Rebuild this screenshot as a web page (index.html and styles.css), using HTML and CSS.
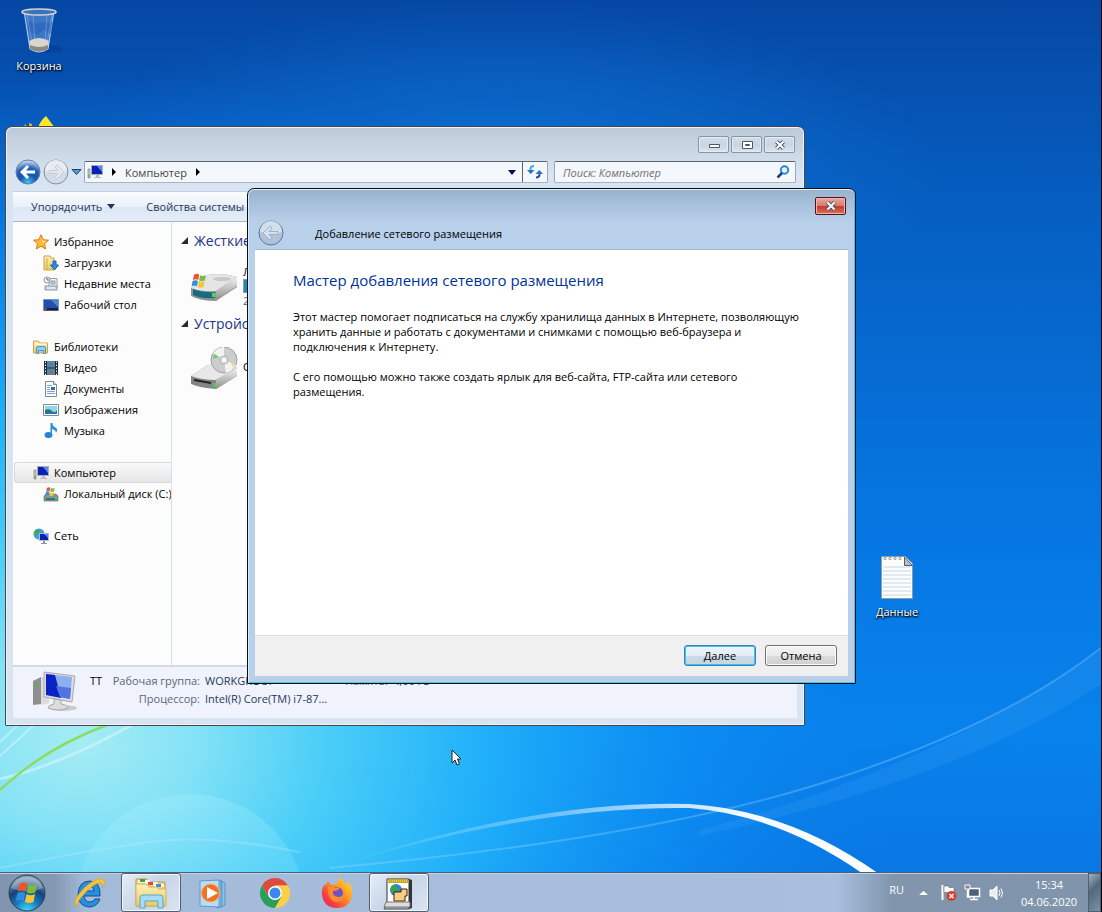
FILE: index.html
```html
<!DOCTYPE html>
<html lang="ru">
<head>
<meta charset="utf-8">
<title>Добавление сетевого размещения</title>
<link rel="stylesheet" href="styles.css">
</head>
<body>
<svg width="0" height="0" class="defs" aria-hidden="true">
  <defs>
    <linearGradient id="metal" x1="0" y1="0" x2="0" y2="1"><stop offset="0" stop-color="#f4f4f4"/><stop offset="1" stop-color="#8e8e8e"/></linearGradient>
    <linearGradient id="fold" x1="0" y1="0" x2="0" y2="1"><stop offset="0" stop-color="#fdf1b8"/><stop offset="1" stop-color="#e9c867"/></linearGradient>
    <symbol id="pc" viewBox="0 0 16 16"><path d="M1 5h2v9H1z" fill="#c9cdd0" stroke="#777" stroke-width=".6"/><path d="M1.500 11h1v2h-1z" fill="#3a3"/><path d="M4.500 1.500h11v9h-11z" fill="#0a22b4" stroke="#a9adb4"/><path d="M10 2l5 0v6z" fill="#5e85ee"/><path d="M9 11h3v2h2v1H7v-1h2z" fill="#b8bcc2"/></symbol>
    <symbol id="flag" viewBox="0 0 16 16"><path d="M2.800 2.500q3-1.700 5 0L6.800 7.500q-2-1.500-5 0z" fill="#e8562a"/><path d="M8.600 3q2.500 1.400 5.500 0L13 8q-3 1.400-5.400 0z" fill="#7dbb3c"/><path d="M1.500 8.500q3-1.500 5 0l-1 5q-2-1.500-5 0z" fill="#2d8fe0"/><path d="M7.400 9q2.500 1.500 5.400 0l-1 5q-3 1.400-5.400 0z" fill="#fac535"/></symbol>
    <symbol id="cross" viewBox="0 0 12 10"><path d="M2.500 1.500l7 7M9.500 1.500l-7 7" stroke="#4e5668" stroke-width="4"/><path d="M2.500 1.500l7 7M9.500 1.500l-7 7" stroke="#fff" stroke-width="2"/></symbol>
  </defs>
</svg>

<div class="desktop">
  <svg class="wallpaper" viewBox="0 0 1102 912" preserveAspectRatio="none" aria-hidden="true">
    <defs>
      <linearGradient id="sky" x1="0" y1="0" x2="0" y2="1"><stop offset="0" stop-color="#0647a4"/><stop offset=".22" stop-color="#055ec0"/><stop offset=".55" stop-color="#0675e0"/><stop offset=".8" stop-color="#0882ec"/><stop offset="1" stop-color="#0a74e0"/></linearGradient>
      <radialGradient id="glow" gradientUnits="userSpaceOnUse" cx="80" cy="740" r="820" gradientTransform="translate(0 140) scale(1 .81)"><stop offset="0" stop-color="#a6ecf4"/><stop offset=".14" stop-color="#84e2f6"/><stop offset=".3" stop-color="#4acef8"/><stop offset=".5" stop-color="#20b0fa" stop-opacity=".97"/><stop offset=".75" stop-color="#0c92f6" stop-opacity=".6"/><stop offset="1" stop-color="#0a7cec" stop-opacity="0"/></radialGradient>
      <radialGradient id="mid" cx=".5" cy=".5" r=".5"><stop offset="0" stop-color="#1078dc" stop-opacity=".75"/><stop offset="1" stop-color="#1078d8" stop-opacity="0"/></radialGradient>
      <linearGradient id="streak" x1="0" x2="1" y1="0" y2="0"><stop offset="0" stop-color="#fff" stop-opacity="0"/><stop offset=".4" stop-color="#fff" stop-opacity=".35"/><stop offset=".75" stop-color="#fff" stop-opacity=".95"/><stop offset="1" stop-color="#fff"/></linearGradient>
      <linearGradient id="arc" x1="0" x2="0" y1="0" y2="1"><stop offset="0" stop-color="#b8f4ff" stop-opacity=".24"/><stop offset="1" stop-color="#b8f4ff" stop-opacity="0"/></linearGradient>
    </defs>
    <path d="M0 0h1102v912H0z" fill="url(#sky)"/>
    <ellipse cx="500" cy="170" rx="440" ry="170" fill="url(#mid)"/>
    <path d="M0 0h1102v912H0z" fill="url(#glow)"/>
    <circle cx="190" cy="910" r="116" fill="url(#arc)"/>
    <path d="M0 779Q60 765 132 725" stroke="#d9f8fb" stroke-width="3" opacity=".55" fill="none"/>
    <path d="M0 756Q20 738 34 725M0 742L18 725" stroke="#d9f8fb" stroke-width="2" opacity=".5" fill="none"/>
    <path d="M0 790Q45 748 107 725" stroke="#8bdd61" stroke-width="2.500" fill="none"/>
    <path d="M0 868Q90 850 150 842T300 852" stroke="#bfeaff" stroke-width="2" opacity=".3" fill="none"/>
    <path d="M330 868Q640 840 820 784T1102 648" stroke="#a5deff" stroke-width="2" opacity=".3" fill="none"/>
    <path d="M700 830Q930 770 1102 650V684Q960 780 700 836z" fill="#62bcff" opacity=".13"/>
    <path d="M330 868Q530 800 690 804Q790 810 880 874L864 874Q780 815 690 808Q530 806 330 868z" fill="url(#streak)"/>
  </svg>

  <div class="shortcut bin">
    <svg width="48" height="48" viewBox="0 0 48 48" aria-hidden="true"><ellipse cx="33" cy="42" rx="14" ry="4" fill="#06318a" opacity=".4"/><path d="M9 4l6 38q9 6 18 0l6-38z" fill="#79aae8" fill-opacity=".48" stroke="#b9d3f2" stroke-width="1"/><path d="M13 14l9 3 4-2 8 1 4-2-2 13-7-4-7 5-9-4z" fill="#245bb5" opacity=".5"/><path d="M14 34q10-6 20 0l-1 8q-9 5-18 0z" fill="#d8d6cf"/><path d="M15 42q9 5 18 0v-4q-9 4-18 0z" fill="#8d8a82"/><path d="M12 8l5 28M18 9l2 26M32 9l-2 26M37 8l-5 28" stroke="#cde1fa" opacity=".3"/><ellipse cx="24" cy="5" rx="17" ry="3" fill="#3d70be" stroke="#d4d4d0" stroke-width="1.500"/></svg>
    <span>Корзина</span>
  </div>
  <svg class="peek" width="40" height="20" viewBox="0 0 40 20" aria-hidden="true"><path d="M0 12l5-4v4zM8 12V7l3 1v4z" fill="#f0a81c"/><path d="M17 12q2-7 8-12l9 12z" fill="#fde52b"/></svg>
  <div class="shortcut data">
    <svg width="48" height="48" viewBox="0 0 48 48" aria-hidden="true"><path d="M8.500 3.500h24l7 7v35h-31z" fill="#fdfdfd" stroke="#8d9aa8"/><path d="M31.500 4v8.500h8z" fill="#b8bcc4" stroke="#555e6c"/><path d="M10 14h28M10 18h28M10 22h28M10 26h28M10 30h28M10 34h28M10 38h28M10 42h28" stroke="#c5d5e6"/><g fill="#fff" stroke="#999"><circle cx="12" cy="5.500" r="1.200"/><circle cx="17" cy="5.500" r="1.200"/><circle cx="22" cy="5.500" r="1.200"/><circle cx="27" cy="5.500" r="1.200"/></g></svg>
    <span>Данные</span>
  </div>

  <section class="explorer" aria-label="Компьютер">
    <div class="caption">
      <button aria-label="Свернуть"><svg width="12" height="10"><path d="M1.500 4.500h10v3h-10z" fill="#fff" stroke="#4e5668"/></svg></button>
      <button aria-label="Развернуть"><svg width="12" height="10"><path d="M1.500 1.500h10v7h-10z" fill="#fff" stroke="#4e5668"/><path d="M4.500 4.500h4v1h-4z" fill="#fff" stroke="#4e5668"/></svg></button>
      <button aria-label="Закрыть"><svg width="12" height="10"><use href="#cross"/></svg></button>
    </div>
    <div class="navbar">
      <div class="travel">
        <button class="round" aria-label="Назад"><svg width="26" height="26" viewBox="0 0 26 26"><defs><radialGradient id="bb" cx=".5" cy=".95" r=".9"><stop offset="0" stop-color="#3fc9f8"/><stop offset=".4" stop-color="#1453ae"/><stop offset=".7" stop-color="#2560bb"/><stop offset="1" stop-color="#c2d5f0"/></radialGradient></defs><circle cx="13" cy="13" r="12" fill="url(#bb)" stroke="#6b7e96"/><path d="M12 6L5 13l7 7 2-2-3-3.500h9v-3h-9L14 8z" fill="#fff"/></svg></button>
        <button class="round" aria-label="Вперед"><svg width="26" height="26" viewBox="0 0 26 26"><circle cx="13" cy="13" r="12" fill="#d2dbe6" stroke="#818e9f"/><path d="M2 12a11 11 0 0 1 22 0q-11 4-22 0z" fill="#e9edf2"/><path d="M14 6l7 7-7 7-2-2 3-3.500H6v-3h9L12 8z" fill="#e2e8ee" stroke="#c6ced8"/></svg></button>
        <svg width="11" height="8"><path d="M1 1.500h9L5.500 6.500z" fill="#4f9fd0" stroke="#1d3f78"/></svg>
      </div>
      <div class="address">
        <svg width="16" height="16"><use href="#pc"/></svg>
        <svg class="sep" width="6" height="8"><path d="M1 0l4 4-4 4z"/></svg>
        <span>Компьютер</span>
        <svg class="sep" width="6" height="8"><path d="M1 0l4 4-4 4z"/></svg>
        <svg class="drop" width="8" height="5"><path d="M0 0h8L4 5z" fill="#0a0a5c"/></svg>
        <button class="refresh" aria-label="Обновить"><svg width="16" height="14" viewBox="0 0 16 14"><path d="M7 1Q3.500 1 3.500 4v2" stroke="#35b4d8" stroke-width="2" fill="none"/><path d="M0 5h7.500L3.700 9z" fill="#2a70c4"/><path d="M9 12.500q3.500 0 3.500-3V8" stroke="#26509f" stroke-width="2" fill="none"/><path d="M8.500 9H16l-3.700-4z" fill="#2a70c4"/></svg></button>
      </div>
      <label class="search"><input type="text" placeholder="Поиск: Компьютер" aria-label="Поиск: Компьютер"><svg width="14" height="14"><circle cx="8.500" cy="5" r="3.700" fill="#e4f3fc" stroke="#2f86cc" stroke-width="2"/><path d="M6 8l-4.500 4.500" stroke="#1b4088" stroke-width="2.500"/></svg></label>
    </div>
    <div class="toolbar"><button>Упорядочить <svg width="8" height="5"><path d="M0 0h8L4 5z" fill="#1e395b"/></svg></button><button>Свойства системы</button></div>
    <div class="body">
      <nav class="tree">
        <ul>
          <li><svg width="16" height="16"><path d="M8 .8l2.200 4.900 5.300.5-4 3.500 1.200 5.300L8 12.200 3.300 15l1.200-5.300-4-3.500 5.300-.5z" fill="#fdb93a" stroke="#d67a18"/><path d="M8 3l1.500 3.500 3.500.5-3 2.500z" fill="#ffe28a"/></svg><a href="#">Избранное</a></li>
          <li class="sub"><svg width="16" height="16"><path d="M1 1h6l1 2h3v12H1z" fill="url(#fold)" stroke="#c9a544"/><path d="M4 3v12" stroke="#d0ae50"/><path d="M10 6h3v4h2.500L11.500 15 7.500 10H10z" fill="#2a8ce8" stroke="#1560a8"/></svg><a href="#">Загрузки</a></li>
          <li class="sub"><svg width="16" height="16"><path d="M6 2.500h8v9H6z" fill="#edf2f6" stroke="#98a4ae"/><path d="M8 5h4v3H8zM2 10h12v4H2z" fill="#c6d2db" stroke="#909ca6"/><path d="M4 12h8" stroke="#fff"/><circle cx="4" cy="4" r="3" fill="#f8f8f8" stroke="#8795a0"/><path d="M4 2v2h2" stroke="#666" fill="none"/></svg><a href="#">Недавние места</a></li>
          <li class="sub"><svg width="16" height="16"><path d="M.5 2.500h15v11H.5z" fill="#1f50b0" stroke="#7492bc"/><path d="M8 3h7v7z" fill="#4e83cd"/><path d="M1 11h14v2.500H1z" fill="#162038"/><path d="M1 12h3" stroke="#f06a38"/></svg><a href="#">Рабочий стол</a></li>
          <li class="gap"><svg width="16" height="16"><path d="M.5 2h5l1 2h8v10H.5z" fill="url(#fold)" stroke="#caa64a"/><path d="M2 5h12" stroke="#fff"/><path d="M3.500 14.500V9q0-1.500 1.500-1.500h6q1.500 0 1.500 1.500v5.500h-2v-3h-5v3z" fill="#90d0f5" stroke="#4696c8"/></svg><a href="#">Библиотеки</a></li>
          <li class="sub"><svg width="16" height="16"><path d="M1 1h14v14H1z" fill="#252b31"/><path d="M4 1h8v6.500H4zM4 8.500h8V15H4z" fill="#3f8ec4"/><path d="M6 2l4 2-2 3zM5 14l3-5 3 4z" fill="#bc5f3c"/><path d="M2.500 1.500v14M13.500 1.500v14" stroke="#e8e8e8" stroke-dasharray="1.500 1.500"/></svg><a href="#">Видео</a></li>
          <li class="sub"><svg width="16" height="16"><path d="M2.500.5h8l3 3v12h-11z" fill="#fff" stroke="#7e8a95"/><path d="M10.500.5v3h3" fill="#dfe5ea" stroke="#7e8a95"/><path d="M4 4.500h5M4 6.500h3M4 8.500h3M4 10.500h8M4 12.500h8" stroke="#7fa3c4"/><path d="M8 6h4v3H8z" fill="#2c6fb8"/></svg><a href="#">Документы</a></li>
          <li class="sub"><svg width="16" height="16"><path d="M.5 2.500h15v11H.5z" fill="#fff" stroke="#7f8b94"/><path d="M2 4h12v8H2z" fill="#8fd4f0"/><path d="M2 8q4-2 7 1t5-1v4H2z" fill="#28795f"/><path d="M2 10h12v2H2z" fill="#2474b8"/></svg><a href="#">Изображения</a></li>
          <li class="sub"><svg width="16" height="16"><ellipse cx="5.500" cy="12" rx="4" ry="3" fill="#2580cf"/><path d="M7.500 0h2q0 3 3 4.500T13 10q0-3-4-4v6h-1.500z" fill="#2b8fdc"/></svg><a href="#">Музыка</a></li>
          <li class="gap selected"><svg width="16" height="16"><use href="#pc"/></svg><a href="#">Компьютер</a></li>
          <li class="sub"><svg width="16" height="16"><path d="M1 10l2-2h10l2 2v5H1z" fill="#8b9294" stroke="#5d6466" stroke-width=".6"/><path d="M3 12h9v2H3z" fill="#2c7a80"/><path d="M12 12h2v2h-2z" fill="#37d146"/><svg x="2" width="11" height="11"><use href="#flag"/></svg></svg><a href="#">Локальный диск (C:)</a></li>
          <li class="gap"><svg width="16" height="16"><circle cx="6" cy="6" r="5.500" fill="#3f9fe8"/><path d="M2 3q3-3 5-1L5 5 3 8 1 6zM7 7l4-2-1 5z" fill="#3dae40"/><path d="M6.500 5.500h9v7h-9z" fill="#0a22b4" stroke="#b5bbc4"/><path d="M11 6h4v4z" fill="#5e85ee"/><path d="M10 13h2v2h2v1H8v-1h2z" fill="#8e949c"/></svg><a href="#">Сеть</a></li>
        </ul>
      </nav>
      <div class="files">
        <h2><svg width="7" height="7"><path d="M7 0v7H0z" fill="#2a2a2a"/></svg>Жесткие диски (1)</h2>
        <div class="drive">
          <svg width="48" height="48" viewBox="0 0 48 48"><path d="M1 24L18 11q14-3 29 2v10L26 37Q10 37 1 32z" fill="#929292"/><path d="M1 24L18 11q14-3 29 2L26 27Q12 28 1 24z" fill="#e5e5e5"/><path d="M26 27L47 13v9L26 36z" fill="url(#metal)"/><path d="M3 25q12 4 22 3v6Q12 35 3 31z" fill="#176b82"/><path d="M22 29h3v4h-3z" fill="#45e04a"/><ellipse cx="32" cy="15" rx="9" ry="2" fill="#c8c8c8"/><svg x="1" y="8" width="17" height="17"><use href="#flag"/></svg></svg>
          <div class="info"><span>Локальный диск (C:)</span><div class="meter"></div><small>26,5 ГБ свободно из 39,9 ГБ</small></div>
        </div>
        <h2><svg width="7" height="7"><path d="M7 0v7H0z" fill="#2a2a2a"/></svg>Устройства со съемными носителями (1)</h2>
        <div class="drive">
          <svg width="48" height="48" viewBox="0 0 48 48"><path d="M1 29l17-11q15-2 29 3v8L26 42Q10 41 1 37z" fill="#858585"/><path d="M1 29l17-11q15-2 29 3L26 33Q12 33 1 29z" fill="#e8e8e8"/><path d="M26 33l21-12v8L26 42z" fill="url(#metal)"/><path d="M4 33l17 3" stroke="#222" stroke-width="2"/><path d="M23 36h3v4h-3z" fill="#3fd441"/><circle cx="34" cy="13" r="13" fill="#cdcdcd" stroke="#a2a2a2"/><path d="M34 13L23 6q5-6 11-6zM34 13l12 5q-4 7-10 8z" fill="#f2f2f2"/><path d="M24 7l5 3-6 2z" fill="#67cf65"/><path d="M41 16l5 1-3 3z" fill="#ecd58a"/><circle cx="34" cy="13" r="4" fill="#e8e8e8" stroke="#aaa"/><circle cx="34" cy="13" r="1.500" fill="#fff"/></svg>
          <div class="info"><span>CD-дисковод (D:)</span></div>
        </div>
      </div>
    </div>
    <footer class="details">
      <svg width="48" height="44" viewBox="0 0 48 44"><path d="M1 11l8-4v27l-8 1z" fill="#8d908f"/><path d="M9 7l8 2v24l-8 2z" fill="#dcdcdc"/><path d="M3 15h3v2H3z" fill="#36c53c"/><ellipse cx="31" cy="38" rx="14" ry="3" fill="#c9ccd4"/><path d="M12 2l31 4-3 26-28-5z" fill="#dadcdf" stroke="#aaa"/><path d="M14 4l26 3-2 22-24-4z" fill="#8daff2"/><path d="M14 4l9 1 6 23-15-3z" fill="#0a22c4"/><path d="M24 16l15 2-1 11-10-2z" fill="#5273e0"/><path d="M22 29l7 1v4q7 1 7 4-10 4-20 0 0-3 6-4z" fill="#dcdcdc" stroke="#aaa"/></svg>
      <dl>
        <dt class="name">TT</dt><dt>Рабочая группа:</dt><dd>WORKGROUP</dd><dt class="memory">Память:</dt><dd>4,00 ГБ</dd>
        <dt class="cpu">Процессор:</dt><dd class="wide">Intel(R) Core(TM) i7-87...</dd>
      </dl>
    </footer>
  </section>

  <section class="dialog" role="dialog" aria-labelledby="dialog-title">
    <header>
      <button class="close" aria-label="Закрыть"><svg width="12" height="10"><use href="#cross"/></svg></button>
      <div class="title"><button class="round" aria-label="Назад"><svg width="26" height="26" viewBox="0 0 26 26"><circle cx="13" cy="13" r="12" fill="#afc2d9" stroke="#5d7796"/><path d="M2 12a11 11 0 0 1 22 0q-11 5-22 0z" fill="#d3dfec"/><path d="M12 6L5 13l7 7 2-2-3-3.500h9v-3h-9L14 8z" fill="#d5e0ec" stroke="#9cb0c8"/></svg></button><span id="dialog-title">Добавление сетевого размещения</span></div>
    </header>
    <div class="page">
      <h1>Мастер добавления сетевого размещения</h1>
      <p>Этот мастер помогает подписаться на службу хранилища данных в Интернете, позволяющую<br>хранить данные и работать с документами и снимками с помощью веб-браузера и<br>подключения к Интернету.</p>
      <p>С его помощью можно также создать ярлык для веб-сайта, FTP-сайта или сетевого<br>размещения.</p>
    </div>
    <div class="actions"><button class="primary">Далее</button><button>Отмена</button></div>
  </section>

  <svg class="cursor" width="12" height="19" viewBox="0 0 12 19" aria-hidden="true"><path d="M1 1v13l3-3 2 5 2.500-1-2-5H10z" fill="#fff" stroke="#222"/></svg>

  <footer class="taskbar">
    <button class="start" aria-label="Пуск"><svg width="40" height="38" viewBox="0 0 40 38"><defs><radialGradient id="orb" cx=".5" cy="1" r=".9"><stop offset="0" stop-color="#46dcfa"/><stop offset=".4" stop-color="#1677bd"/><stop offset=".7" stop-color="#174377"/><stop offset="1" stop-color="#7e99b5"/></radialGradient></defs><circle cx="20" cy="19" r="18" fill="url(#orb)" stroke="#26435f"/><path d="M4 14a17 17 0 0 1 32 0q-15 7-32 0z" fill="#fff" opacity=".28"/><svg x="8" y="6" width="25" height="25" viewBox="0 0 16 16"><use href="#flag"/></svg></svg></button>
    <button class="task" aria-label="Internet Explorer"><svg width="36" height="36" viewBox="0 0 36 36"><path d="M29 21H13q1 6 6 6 3 0 5-3h5q-3 8-11 8-11-1-11-13Q8 6 19 6q11 1 10 15zM13 16h10q-1-5-5-5t-5 5z" fill="#2590dc" stroke="#134f98"/><path d="M6 32Q-1 28 13 13 28 0 33 5q2 3-2 8 1-4-1-5-5-1-14 8Q5 27 6 32z" fill="#f6c43a" stroke="#cf951d" stroke-width=".5"/></svg></button>
    <button class="task active" aria-label="Проводник"><svg width="36" height="36" viewBox="0 0 36 36"><path d="M3 4h11l2 3h16v24H3z" fill="#efd27a" stroke="#bb9948"/><path d="M5 5h11l2 3H5z" fill="#fffbe8"/><path d="M7 4h5v3H7z" fill="#40a04b"/><path d="M13 7h11l2 3H13z" fill="#fffbe8"/><path d="M15 7h5v3h-5z" fill="#d94a3a"/><path d="M21 9h10v3H21z" fill="#fffbe8"/><path d="M23 9h5v3h-5z" fill="#3e90dc"/><path d="M3 9h10l3 3h8l2 2h7v17H3z" fill="url(#fold)" stroke="#d4b45e"/><path d="M7 33V23q0-3 3-3h17q3 0 3 3v10h-5v-7H12v7z" fill="#a6dcf6" stroke="#54a8d4"/></svg></button>
    <button class="task" aria-label="Проигрыватель"><svg width="36" height="36" viewBox="0 0 36 36"><path d="M26 6l4 2v22l-4 2zM22 5l5 1v26l-5 1z" fill="#8fc3e8" stroke="#5a96c8"/><path d="M5 6l19-1v27L5 31z" fill="#b8ddf4" stroke="#5a99cb"/><circle cx="15.500" cy="18" r="9" fill="#f27020" stroke="#fbb064"/><path d="M12 12v12l11-6z" fill="#fff"/></svg></button>
    <button class="task" aria-label="Chrome"><svg width="36" height="36" viewBox="0 0 36 36"><path d="M5 10.500A15 15 0 0 1 31 10.500H18L11.500 21.700z" fill="#de4b3c"/><path d="M5 10.500A15 15 0 0 0 18 33l6.500-11.200H11.500z" fill="#28a05a"/><path d="M31 10.500A15 15 0 0 1 18 33l6.500-11.200L18 10.500z" fill="#fdcf45"/><circle cx="18" cy="18" r="7" fill="#fff"/><circle cx="18" cy="18" r="5.500" fill="#3c87ee"/></svg></button>
    <button class="task" aria-label="Firefox"><svg width="36" height="36" viewBox="0 0 36 36"><defs><linearGradient id="ff" x1="1" y1="0" x2="0" y2="1"><stop offset="0" stop-color="#ffe536"/><stop offset=".4" stop-color="#ff9a24"/><stop offset=".75" stop-color="#f23c41"/><stop offset="1" stop-color="#d72a7c"/></linearGradient></defs><path d="M22 2q1 4 6 7l1-2q5 5 4 13-2 13-15 13T3 20Q2 14 6 9l1 1 2-4 3 4 6-1q1-5 4-7z" fill="url(#ff)"/><circle cx="18" cy="18" r="6" fill="#7053c8"/><path d="M9 11q5 3 12 1-1 4-7 4-1 5 5 6 6 0 7-5-1 10-9 10-9-2-8-16z" fill="#ff8a29"/></svg></button>
    <button class="task active" aria-label="Сетевое размещение"><svg width="36" height="36" viewBox="0 0 36 36"><path d="M5 30h23v4H3z" fill="#b5b5b5" stroke="#555"/><path d="M28 4l3 1v28l-3 1z" fill="#353535"/><path d="M6 4h22v25H6z" fill="#fff" stroke="#333"/><path d="M7 4h20v4H7z" fill="#c4a51e"/><path d="M7 6h20" stroke="#fff38c" stroke-dasharray="1 1"/><circle cx="15" cy="15" r="6" fill="#3284d6"/><path d="M10 12l5-2 2 4-4 5-3-3z" fill="#2cab42"/><path d="M13 17h7v-3h6v7h-2v5H13z" fill="#f7ce82" stroke="#382408"/><path d="M5 27h24v5H3z" fill="#ddd" stroke="#777"/></svg></button>
    <div class="tray">
      <span class="lang">RU</span>
      <svg class="more" width="10" height="6"><path d="M0 5l4.500-4L9 5z" fill="#fff"/></svg>
      <svg width="18" height="18"><path d="M2.500 1v15" stroke="#fff" stroke-width="2"/><path d="M4 2h5v1.500h5V10H9V8.500H4z" fill="#fff" stroke="#4a5460" stroke-width=".5"/><circle cx="11.500" cy="12" r="5" fill="#d8402c"/><path d="M9.500 10l4 4M13.500 10l-4 4" stroke="#fff" stroke-width="1.500"/></svg>
      <svg width="18" height="18"><path d="M4.500 4.500h11v8h-11z" fill="#4e6278" stroke="#fff" stroke-width="1.500"/><path d="M10 13v2M6 15.500h8M3.500 6v7h3" stroke="#fff" stroke-width="1.500" fill="none"/><path d="M1 1h5v4H1z" fill="#76879b" stroke="#fff"/></svg>
      <svg width="18" height="18"><path d="M2 6h3l4-4v14l-4-4H2z" fill="#e9eef3" stroke="#fff"/><path d="M11 6q2 3 0 6M13 4.500q3 4.500 0 9" stroke="#fff" fill="none"/></svg>
      <time class="clock">15:34<br>04.06.2020</time>
      <button class="show" aria-label="Показать рабочий стол"></button>
    </div>
  </footer>
</div>
</body>
</html>
```
FILE: styles.css
```css
* { box-sizing: border-box; }
body {
  margin: 0;
  font: 11px/15px "Open Sans", "Noto Sans", sans-serif;
  color: #000;
}
.defs { position: absolute; }
svg { display: block; flex: none; }
button { font: inherit; color: inherit; padding: 0; border: 0; background: none; }
a { color: inherit; text-decoration: none; }
h1, h2, p, ul, dl, dd { margin: 0; padding: 0; font-weight: normal; }

.desktop {
  position: relative;
  height: 100vh;
  overflow: hidden;
  display: flex;
  flex-direction: column;
  justify-content: flex-end;
  border-right: 1px solid #000;
}
.wallpaper { position: absolute; inset: 0; width: 100%; height: 100%; }

.shortcut {
  position: absolute;
  width: 74px;
  display: flex;
  flex-direction: column;
  align-items: center;
  gap: 3px;
  color: #fff;
  text-shadow: 1px 1px 2px #000, 0 1px 2px #000;
}
.bin { left: 2px; top: 7px; }
.data { left: 860px; top: 553px; }
.peek { position: absolute; left: 21px; top: 116px; }
.cursor { position: absolute; left: 451px; top: 749px; }

.explorer {
  position: absolute;
  left: 5px;
  top: 126px;
  width: 800px;
  height: 600px;
  display: flex;
  flex-direction: column;
  padding: 0 7px 7px;
  border: 1px solid #45474b;
  border-radius: 7px 7px 1px 1px;
  background: linear-gradient(#bccad7, #d8e4f1 48px, #d8e4f1);
  box-shadow: inset 0 0 0 1px #edf3f9;
}
.caption { display: flex; justify-content: flex-end; gap: 2px; padding: 9px 2px 0; height: 33px; }
.caption button {
  display: grid;
  place-items: center;
  width: 31px;
  height: 17px;
  border: 1px solid #8593ab;
  border-radius: 2px;
  background: linear-gradient(#d3dee9, #c9d5e2 50%, #d8e3ef);
  box-shadow: inset 0 0 0 1px #e3ebf4;
}
.navbar { display: flex; align-items: center; height: 24px; padding-right: 1px; margin-bottom: 7px; gap: 6px; }
.travel { display: flex; align-items: center; gap: 2px; width: 65px; padding-left: 2px; }
.address, .search {
  display: flex;
  align-items: center;
  height: 22px;
  border: 1px solid #6d7987;
  border-color: #5c6672 #9aa7b5 #a9b5c1;
  background: #f4f8fc;
  border-radius: 2px;
}
.address { flex: 1; gap: 8px; padding-left: 2px; color: #444; }
.drop { margin-left: auto; }
.refresh { display: grid; place-items: center; width: 25px; height: 20px; border-left: 1px solid #5c6672; margin-left: -2px; }
.search { width: 242px; padding: 0 5px 0 8px; }
.search input {
  flex: 1;
  min-width: 0;
  padding: 0;
  border: 0;
  outline: 0;
  background: none;
  font: inherit;
  font-style: italic;
}
.search input::placeholder { color: #707070; opacity: 1; }
.toolbar {
  display: flex;
  align-items: center;
  gap: 31px;
  height: 31px;
  padding: 0 0 1px 18px;
  color: #1e395b;
  border-top: 1px solid #c3d0df;
  border-bottom: 1px solid #a6b6ca;
  background: linear-gradient(#fafcfe, #e9f0f9 50%, #dce6f4 51%, #e4ecf7);
}
.toolbar button { display: flex; align-items: center; gap: 5px; white-space: nowrap; }
.body { display: flex; flex: 1; min-height: 0; background: #fcfcfc; }
.tree { width: 159px; padding-top: 9px; overflow: hidden; border-right: 1px solid #d5e1ee; }
.tree ul { list-style: none; }
.tree li {
  display: flex;
  align-items: center;
  gap: 5px;
  height: 21px;
  padding-left: 19px;
  white-space: nowrap;
  border: 1px solid transparent;
}
.tree .sub { padding-left: 29px; }
.tree .gap { margin-top: 21px; }
.tree .selected {
  margin-left: 1px;
  padding-left: 18px;
  border-color: #d9d9d9;
  border-right: 0;
  border-radius: 3px 0 0 3px;
  background: linear-gradient(#fafafa, #e5e5e5);
}
.files { flex: 1; min-width: 0; padding: 8px 9px 0; }
.files h2 { display: flex; align-items: center; gap: 6px; font-size: 14px; line-height: 21px; color: #1e3287; }
.drive { display: flex; gap: 5px; height: 62px; padding: 13px 0 0 9px; }
.info { display: flex; flex-direction: column; }
.drive:last-child .info { padding-top: 12px; }
.meter { width: 180px; height: 14px; border: 1px solid #8b9ba8; background: linear-gradient(90deg, #178db4 40%, #e6e6e6 40%); }
.info small { font-size: 11px; color: #666; }
.details {
  display: flex;
  gap: 10px;
  height: 53px;
  padding: 3px 19px;
  border-top: 2px solid #cfdbea;
  background: #f0f3fc;
}
.details dl {
  display: grid;
  grid-template-columns: 15px 90px 127px 51px auto;
  column-gap: 5px;
  grid-auto-rows: 18px;
  padding-top: 3px;
  white-space: nowrap;
  color: #1e395b;
}
.details dt { text-align: right; color: #5a6779; }
.details .name { color: #000; text-align: left; }
.details .cpu { grid-column: 1 / 3; }
.details .wide { grid-column: 3 / 6; }

.dialog {
  position: absolute;
  left: 247px;
  top: 188px;
  width: 609px;
  height: 496px;
  display: flex;
  flex-direction: column;
  padding: 0 7px 7px;
  border: 1px solid #0a0f16;
  border-radius: 7px 7px 1px 1px;
  background: linear-gradient(#98b3cf, #b9d0ea 34px, #b9d0ea);
  box-shadow: inset 0 1px #e8f2fb, inset 1px 0 #dcebf8, inset -1px -1px #3fc8ea;
}
.dialog header { height: 61px; padding: 8px 2px 0 3px; border-bottom: 1px solid #a4b8d0; }
.close {
  display: grid;
  place-items: center;
  width: 31px;
  height: 18px;
  margin-left: auto;
  border: 1px solid #4a1424;
  border-radius: 2px;
  background: linear-gradient(#e5aaa0, #d7796c 50%, #c23a28 51%, #dc7058);
  box-shadow: inset 0 0 0 1px #eeb6ae;
}
.title { display: flex; align-items: center; gap: 31px; padding-top: 5px; }
.page { flex: 1; padding: 19px 38px; background: #fff; }
.page h1 { margin-bottom: 18px; font-size: 15px; line-height: 22px; color: #003399; }
.page p { margin-bottom: 15px; white-space: nowrap; }
.actions { display: flex; justify-content: flex-end; gap: 9px; height: 41px; padding: 9px 11px 0; background: #f0f0f0; border-top: 1px solid #dfdfdf; }
.actions button {
  width: 72px;
  height: 21px;
  border: 1px solid #707070;
  border-radius: 3px;
  background: linear-gradient(#f3f3f3, #ebebeb 50%, #dcdcdc 51%, #cfcfcf);
  box-shadow: inset 0 0 0 1px #fbfbfb;
}
.actions .primary {
  border-color: #3c7fb1;
  background: linear-gradient(#eef3f7, #e4edf4 50%, #ccdbe8 51%, #c5d5e2);
  box-shadow: inset 0 0 0 1px #35c6f0;
}

.taskbar {
  position: relative;
  display: flex;
  align-items: stretch;
  gap: 2px;
  height: 40px;
  padding-left: 7px;
  border-top: 1px solid #4b6078;
  background: linear-gradient(90deg, #8196ae, #8499b1 55px, #a3bbd9 85px, #a8c0de 76%, #8196ad 81%, #8095ab);
  box-shadow: inset 0 1px #c2d2e6;
}
.start { width: 40px; margin-right: 10px; }
.task { display: grid; place-items: center; width: 60px; border: 1px solid transparent; border-radius: 3px; }
.task.active {
  border-color: #4e6075;
  background: linear-gradient(135deg, #e6edf6, #c6d5e8 50%, #dae5f1);
  box-shadow: inset 0 0 0 1px #f2f6fa;
}
.tray { display: flex; align-items: center; margin-left: auto; gap: 6px; color: #fff; }
.lang { margin: 0 9px 6px 0; }
.more { margin-right: 5px; }
.clock { width: 66px; margin-left: 4px; text-align: center; line-height: 17px; }
.show { align-self: stretch; width: 13px; border: 1px solid #4c5f73; background: linear-gradient(135deg, #a4b2c2, #53687d 40%, #7d90a4); }
```
